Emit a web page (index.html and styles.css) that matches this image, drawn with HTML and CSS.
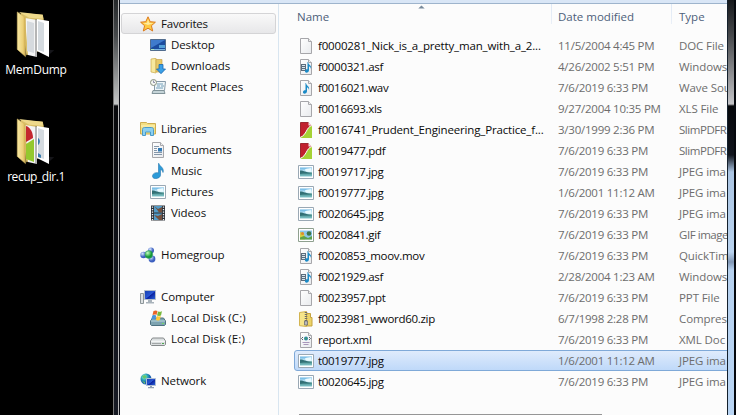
FILE: index.html
```html
<!DOCTYPE html>
<html lang="en">
<head>
<meta charset="utf-8">
<title>Explorer</title>
<link rel="stylesheet" href="styles.css">
</head>
<body>
<svg class="defs" aria-hidden="true">
<defs>
<linearGradient id="gold" x1="0" y1="0" x2="1" y2="0"><stop offset="0" stop-color="#f8e9a4"/><stop offset=".7" stop-color="#ecd078"/><stop offset="1" stop-color="#cba84c"/></linearGradient>
<linearGradient id="paper" x1="0" y1="0" x2="1" y2="1"><stop offset="0" stop-color="#fff"/><stop offset="1" stop-color="#e8eaed"/></linearGradient>
<linearGradient id="sky" x1="0" y1="0" x2="0" y2="1"><stop offset="0" stop-color="#63b2e3"/><stop offset=".5" stop-color="#d8f2f8"/><stop offset=".6" stop-color="#4b9290"/><stop offset="1" stop-color="#83c6cd"/></linearGradient>
<linearGradient id="screen" x1="0" y1="0" x2="1" y2="1"><stop offset="0" stop-color="#153fae"/><stop offset=".5" stop-color="#2956d4"/><stop offset=".55" stop-color="#0a22a0"/><stop offset="1" stop-color="#2f6be0"/></linearGradient>
<radialGradient id="ballb" cx=".35" cy=".3"><stop offset="0" stop-color="#d8e8ff"/><stop offset="1" stop-color="#3c5fc0"/></radialGradient>
<radialGradient id="ballg" cx=".35" cy=".3"><stop offset="0" stop-color="#c4ffc0"/><stop offset="1" stop-color="#159a35"/></radialGradient>
<radialGradient id="globe" cx=".35" cy=".3"><stop offset="0" stop-color="#b0f0f0"/><stop offset=".6" stop-color="#29a7b5"/><stop offset="1" stop-color="#1c62b0"/></radialGradient>
</defs>
<symbol id="page" viewBox="0 0 16 16"><path d="M2.500.5h8l3 3v12h-11z" fill="url(#paper)" stroke="#a6a6aa"/><path d="M10.500.5v3h3" fill="#eee" stroke="#a8a8ac"/></symbol>
<symbol id="note" viewBox="0 0 16 16"><path d="M8 3c.3 3 4 3 3 7-.3-2-1.500-2.500-2-2.500V11c0 3-4 3.500-4 1.200C5 10.500 6.500 10 7.500 10.200V3z" fill="#1a8ac6"/></symbol>
<symbol id="wav" viewBox="0 0 16 16"><use href="#page"/><use href="#note"/></symbol>
<symbol id="media" viewBox="0 0 16 16"><use href="#page"/><path d="M3 5h5v7H3z" fill="#5b6c7c"/><path d="M4 6.500h3M4 8.500h3M4 10.500h3" stroke="#d7e4ec"/><use href="#note" x="2"/></symbol>
<symbol id="pdf" viewBox="0 0 16 16"><path d="M2.500.5h8l3 3v12h-11z" fill="#c1202e" stroke="#9c2730"/><path d="M14 3.500C8 5 9 13 2 15.500v.5h12z" fill="#a5d235"/><path d="M14 3.500C8 5 9 13 2 15.500" fill="none" stroke="#fff"/><path d="M10.500 0v3.500H14z" fill="#f5dedf"/></symbol>
<symbol id="pic" viewBox="0 0 16 16"><path d="M.5 1.500h15v13H.5z" fill="#fff" stroke="#9aa8b4"/><path d="M2 3.500h12v9H2z" fill="url(#sky)"/><path d="M2 6.500c4 0 6 2 12 2.500-4 1-8 0-12 1z" fill="#316f75"/><path d="M7 5.500c2-1.500 4-1 6.500-1.500v3.500c-2 .7-4 .2-6.500-.9z" fill="#eafaff"/></symbol>
<symbol id="gif" viewBox="0 0 16 16"><path d="M.5 1.500h15v13H.5z" fill="#fff" stroke="#8fa08f"/><path d="M2 3.500h12v9H2z" fill="#8cc6ea"/><path d="M2 5l4 1 1 6.500H2z" fill="#d3cf45"/><path d="M2 10.500l4-1.500 4 2 4-2v3.500H2z" fill="#5da24a"/><circle cx="11" cy="6.500" r="2.300" fill="#3f7648"/><circle cx="4.500" cy="6.500" r="1.500" fill="#e08b2c"/></symbol>
<symbol id="zip" viewBox="0 0 16 16"><path d="M1.500 1.500l7-1v15l-7-.8z" fill="#f6e58a" stroke="#d3b450"/><path d="M8.500 2.500h4v4h1.500v8.500H8.500z" fill="#ecd368" stroke="#c5a23e"/><path d="M8 1v11" stroke="#6c6c6a" stroke-width="2.500" stroke-dasharray="1 1"/><path d="M6.500 10h3v4h-3z" fill="#b8b8bb" stroke="#66666a" stroke-width=".7"/></symbol>
<symbol id="xml" viewBox="0 0 16 16"><use href="#page"/><circle cx="8" cy="6.500" r="2" fill="#2d86a9"/><circle cx="8" cy="6.500" r=".9" fill="#43a05b"/><path d="M5 5L3.500 6.500 5 8M11 5l1.500 1.500L11 8" fill="none" stroke="#44505c" stroke-width=".9"/><path d="M4.500 10.500h7M5.500 12.500h5" stroke="#a997ba"/></symbol>
<symbol id="star" viewBox="0 0 16 16"><path d="M8 .8l2.200 4.900 5.200.5-4 3.500 1.300 5.300L8 12.200 3.300 15l1.300-5.300-4-3.500 5.200-.5z" fill="#ffca43" stroke="#dc7b1e"/><path d="M8 3l1.200 4H14L8 9 3 7h4z" fill="#ffeca0"/></symbol>
<symbol id="desktop" viewBox="0 0 16 16"><path d="M.5 2.500h15v11H.5z" fill="#1b4c9f" stroke="#526d8e"/><path d="M1 3h14L1 11z" fill="#3f7bcd"/><path d="M9 8h6v3H9z" fill="#54a2da"/><path d="M1 12.500h14" stroke="#7ab5e3"/><path d="M1 12.500h3" stroke="#b0e6bd"/></symbol>
<symbol id="downloads" viewBox="0 0 16 16"><path d="M1 1l5-.7V15l-5-1z" fill="#f7e89e" stroke="#cbaa4a" stroke-width=".7"/><path d="M6 1.500h6V14H6z" fill="#e8c968" stroke="#c7a34c" stroke-width=".7"/><path d="M9 6.500h4V11h2.500L11 15.700 6.500 11H9z" fill="#3aa0e6" stroke="#1b67b1" stroke-width=".8"/></symbol>
<symbol id="recent" viewBox="0 0 16 16"><path d="M4.500 2.500h11l-1 9h-10z" fill="#eef5f8" stroke="#8699a8"/><path d="M7 5h6M7 7h3m1 0h3M6 9h7" stroke="#739eb8"/><path d="M3 11.500h11l1 3H2z" fill="#c5d4d8" stroke="#819399"/><circle cx="3.500" cy="3.500" r="3" fill="#f4f6f2" stroke="#88917f"/><path d="M3.500 1.500v2H5" fill="none" stroke="#668" stroke-width=".7"/></symbol>
<symbol id="libraries" viewBox="0 0 16 16"><path d="M.5 3V1.500h6l1 1h8V13H.5z" fill="#f3df83" stroke="#cead51"/><path d="M1 5h14" stroke="#fff5bd"/><path d="M2.500 14.500v-6c0-1.500 1-2 2-2h7c1 0 2 .5 2 2v6h-3V11h-5v3.500z" fill="#8bcff0" stroke="#4b9bc8"/></symbol>
<symbol id="docs" viewBox="0 0 16 16"><use href="#page"/><path d="M4 4.500h5M4 6.500h3M4 8.500h3M4 10.500h8M4 12.500h8" stroke="#8597aa"/><path d="M8 6h4v3.500H8z" fill="#3179b5"/></symbol>
<symbol id="music" viewBox="0 0 16 16"><path d="M9 .5c.5 3 5.500 4 4 9-.4-2-1.500-3-2.500-3V12c0 4-8 5-8 1.200C2.500 10 6.500 9 8.500 10V.5z" fill="#2d9bd8" stroke="#2375af" stroke-width=".6"/></symbol>
<symbol id="video" viewBox="0 0 16 16"><path d="M1 .5h14v15H1z" fill="#2c3036"/><path d="M4 1h8v6.500H4zM4 8.500h8V15H4z" fill="#519bc8"/><path d="M4 1l4 3 4-2v5.500H9l-2-3zM4 10l4 1 4-2v6h-3l-2-2z" fill="#74513f"/><path d="M2.500 1.500v14M13.500 1.500v14" stroke="#edf0f4" stroke-width="1.300" stroke-dasharray="1.300 1.200"/></symbol>
<symbol id="home" viewBox="0 0 16 16"><circle cx="11" cy="3.500" r="3" fill="url(#ballb)"/><circle cx="3.500" cy="8" r="3.200" fill="url(#ballb)"/><circle cx="12" cy="12" r="3.400" fill="url(#ballb)"/><circle cx="8.800" cy="7.500" r="3.900" fill="url(#ballg)" stroke="#3c9380" stroke-width=".5"/></symbol>
<symbol id="computer" viewBox="0 0 16 16"><path d="M.5 4.500h3v10h-3z" fill="#dde1e3" stroke="#8d969a"/><path d="M4.500 1.500h11v9h-11z" fill="url(#screen)" stroke="#b3bdca"/><path d="M8 11h4v2H8zM6 13h8v1.500H6z" fill="#a9b3bb"/></symbol>
<symbol id="disk" viewBox="0 0 16 16"><path d="M2.500 7h11l2 3v3.500l-1 1h-13l-1-1V10z" fill="#dadedf" stroke="#85898b"/><path d="M1 10.200h14" stroke="#fff"/><path d="M2 12.500h9" stroke="#a3a7a8"/><path d="M12 12.500h2" stroke="#4ca84e"/></symbol>
<symbol id="diskc" viewBox="0 0 16 16"><path d="M2.500 8h11l2 3v3.500l-1 1h-13l-1-1V11z" fill="#7da3b0" stroke="#4d717f"/><path d="M1 11h14" stroke="#bad6dd"/><path d="M12 13.500h2" stroke="#71db64"/><path d="M3.500 1c2-1 3-.5 4 0L6.500 5c-1.500-.8-2.500-.5-4 0z" fill="#ea6427"/><path d="M8 1.500c1.500.5 3 .5 4-.5l-1 4.500c-1.500.7-3 .4-4 0z" fill="#78b83c"/><path d="M2.300 5.500c1.500-.7 3-.6 4 0L5.300 9.500c-1.500-.8-2.500-.7-4 0z" fill="#4b93d9"/><path d="M6.800 6c1.500.5 3 .5 4 0l-1 4c-1.500.8-3 .5-4 0z" fill="#ffc938"/></symbol>
<symbol id="network" viewBox="0 0 16 16"><circle cx="6" cy="6" r="5.500" fill="url(#globe)"/><path d="M2 3l3-1 2 2-3 2zM2 8l3 1v2z" fill="#65c769"/><path d="M6.500 5.500h9v7h-9z" fill="url(#screen)" stroke="#b1bfd2"/><path d="M10 13h2v1h2v1.200H8V14h2z" fill="#91a1b3"/></symbol>
<symbol id="folder" viewBox="0 0 40 50"><path d="M30 40l9 1-7 6z" fill="#16161a"/><path d="M4 2L27 4l1 4v32L10 46z" fill="#d9bf68"/><path d="M2 1l25 3v4L13 7z" fill="#eed98b"/></symbol>
<symbol id="front" viewBox="0 0 40 50"><path d="M.5 1L9 7v40.500L.5 40z" fill="url(#gold)" stroke="#d6b964" stroke-width=".6"/></symbol>
</svg>

<main class="stage">
  <section class="desk">
    <figure class="shortcut">
      <svg class="big"><use href="#folder"/><path d="M9 7l12 2v37l-9-2z" fill="#f4f4f4"/><path d="M11 10l7 2v30l-7-2z" fill="#d6dade"/><path d="M21 8l12 2v36l-12-6z" fill="#fff"/><path d="M22 10l6 2v29l-6-2z" fill="#d5dbe0"/><path d="M20 8v38" stroke="#777"/><use href="#front"/></svg>
      <figcaption>MemDump</figcaption>
    </figure>
    <figure class="shortcut">
      <svg class="big"><use href="#folder"/><path d="M9 7l12 2v37l-9-2z" fill="#f4f4f4"/><path d="M10 8c4 1 7 6 7 12l-7 4z" fill="#c4282e"/><path d="M10 26l8-5v23l-8-3z" fill="#94c82e"/><path d="M21 8l12 2v36l-12-6z" fill="#fff"/><path d="M22 10l6 2v29l-6-2z" fill="#d5dbe0"/><path d="M22 20c3 2 2 6 0 7zM22 35l3 2v3l-3-1z" fill="#397cae"/><path d="M20 8v38" stroke="#777"/><use href="#front"/></svg>
      <figcaption class="snug">recup_dir.1</figcaption>
    </figure>
  </section>
  <div class="frame left"></div>
  <section class="window">
    <div class="strip"></div>
    <div class="panes">
      <nav class="nav">
        <div class="n root on"><svg><use href="#star"/></svg>Favorites</div>
        <div class="n"><svg><use href="#desktop"/></svg>Desktop</div>
        <div class="n"><svg><use href="#downloads"/></svg>Downloads</div>
        <div class="n"><svg><use href="#recent"/></svg>Recent Places</div>
        <div class="n root gap"><svg><use href="#libraries"/></svg>Libraries</div>
        <div class="n"><svg><use href="#docs"/></svg>Documents</div>
        <div class="n"><svg><use href="#music"/></svg>Music</div>
        <div class="n"><svg><use href="#pic"/></svg>Pictures</div>
        <div class="n"><svg><use href="#video"/></svg>Videos</div>
        <div class="n root gap"><svg><use href="#home"/></svg>Homegroup</div>
        <div class="n root gap"><svg><use href="#computer"/></svg>Computer</div>
        <div class="n disk"><svg><use href="#diskc"/></svg>Local Disk (C:)</div>
        <div class="n disk"><svg><use href="#disk"/></svg>Local Disk (E:)</div>
        <div class="n root gap"><svg><use href="#network"/></svg>Network</div>
      </nav>
      <div class="files">
        <div class="head"><span class="c1">Name</span><span class="c2">Date modified</span><span class="c3">Type</span><svg class="sort" viewBox="0 0 8 5"><path d="M0 4.500L4 .5l4 4z" fill="#788a9b"/></svg></div>
        <div class="rows">
          <div class="r long"><svg><use href="#page"/></svg><b>f0000281_Nick_is_a_pretty_man_with_a_2...</b><i>11/5/2004 4:45 PM</i><em>DOC File</em></div>
          <div class="r"><svg><use href="#media"/></svg><b>f0000321.asf</b><i>4/26/2002 5:51 PM</i><em>Windows</em></div>
          <div class="r"><svg><use href="#wav"/></svg><b>f0016021.wav</b><i>7/6/2019 6:33 PM</i><em>Wave Sou</em></div>
          <div class="r"><svg><use href="#page"/></svg><b>f0016693.xls</b><i>9/27/2004 10:35 PM</i><em>XLS File</em></div>
          <div class="r long"><svg><use href="#pdf"/></svg><b>f0016741_Prudent_Engineering_Practice_f...</b><i>3/30/1999 2:36 PM</i><em class="snug">SlimPDFR</em></div>
          <div class="r"><svg><use href="#pdf"/></svg><b>f0019477.pdf</b><i>7/6/2019 6:33 PM</i><em class="snug">SlimPDFR</em></div>
          <div class="r"><svg><use href="#pic"/></svg><b>f0019717.jpg</b><i>7/6/2019 6:33 PM</i><em>JPEG ima</em></div>
          <div class="r"><svg><use href="#pic"/></svg><b>f0019777.jpg</b><i>1/6/2001 11:12 AM</i><em>JPEG ima</em></div>
          <div class="r"><svg><use href="#pic"/></svg><b>f0020645.jpg</b><i>7/6/2019 6:33 PM</i><em>JPEG ima</em></div>
          <div class="r"><svg><use href="#gif"/></svg><b>f0020841.gif</b><i>7/6/2019 6:33 PM</i><em class="snug">GIF image</em></div>
          <div class="r"><svg><use href="#media"/></svg><b>f0020853_moov.mov</b><i>7/6/2019 6:33 PM</i><em>QuickTim</em></div>
          <div class="r"><svg><use href="#media"/></svg><b>f0021929.asf</b><i>2/28/2004 1:23 AM</i><em>Windows</em></div>
          <div class="r"><svg><use href="#page"/></svg><b>f0023957.ppt</b><i>7/6/2019 6:33 PM</i><em>PPT File</em></div>
          <div class="r"><svg><use href="#zip"/></svg><b>f0023981_wword60.zip</b><i>6/7/1998 2:28 PM</i><em>Compres</em></div>
          <div class="r"><svg><use href="#xml"/></svg><b>report.xml</b><i>7/6/2019 6:33 PM</i><em>XML Doc</em></div>
          <div class="r sel"><svg><use href="#pic"/></svg><b>t0019777.jpg</b><i>1/6/2001 11:12 AM</i><em>JPEG ima</em></div>
          <div class="r"><svg><use href="#pic"/></svg><b>t0020645.jpg</b><i>7/6/2019 6:33 PM</i><em>JPEG ima</em></div>
        </div>
        <div class="scroll"></div>
      </div>
    </div>
  </section>
  <div class="frame right"></div>
</main>
</body>
</html>
```
FILE: styles.css
```css
* { box-sizing: border-box; }
body { margin: 0; background: #000; font: 11.5px/21px "Open Sans", "Noto Sans", sans-serif; color: #111; }
.defs { position: absolute; width: 0; height: 0; }
.stage { display: flex; width: 736px; height: 415px; overflow: hidden; }
.desk { width: 113px; padding-top: 11px; background: #000; }
.shortcut { margin: 0; width: 72px; height: 107px; color: #fff; text-align: center; }
.big { display: block; width: 40px; height: 48px; margin-left: 16px; }
.shortcut figcaption { font-size: 12px; line-height: 22px; letter-spacing: -.25px; white-space: nowrap; }
.shortcut .snug { letter-spacing: -.45px; }
.frame { flex: none; width: 7px; border-left: 1px solid #777; border-right: 2px solid #181a22; background: linear-gradient(#25282a 0, #45484a 35px, #c4c6c6 104px, #07080b 106px, #171a24 415px); }
.left { border-right: 1px solid #0b0d15; box-shadow: inset -1px 0 #bbb; }
.right { width: 9px; border-left: 1px solid #14202c; border-right: 2px solid #05080d; background: linear-gradient(#16181b 0, #46484b 35px, #c4c4c7 104px, #05070a 106px, #11151d 155px, #abc5e3 172px, #b9d3ef 252px, #8096b4 262px, #b6d1ef 270px, #b9d5f4 415px); }
.window { width: 607px; display: flex; flex-direction: column; background: #fcfcfc; overflow: hidden; }
.strip { flex: none; height: 4px; background: #d9e6f6; border-bottom: 1px solid #9eb4cc; }
.panes { display: flex; flex: 1; min-height: 0; }
.nav { width: 159px; padding: 9px 2px 0 1px; border-right: 1px solid #d8e5f0; letter-spacing: -.1px; }
.n { display: flex; align-items: center; height: 21px; padding-left: 29px; white-space: nowrap; }
.n svg { flex: none; width: 16px; height: 16px; margin-right: 5px; }
.n.root { padding-left: 19px; }
.n.gap { margin-top: 21px; }
.n.disk { letter-spacing: .08px; }
.n.on { padding-left: 18px; border: 1px solid #d4d4d6; border-radius: 3px; background: linear-gradient(#f9f9f9, #e7e7e9); letter-spacing: -.2px; }
.files { position: relative; flex: 1; min-width: 0; display: flex; flex-direction: column; }
.head { position: relative; display: flex; height: 31px; color: #4c607a; line-height: 26px; }
.head span { flex: none; }
.c1 { width: 273px; padding-left: 18px; background: linear-gradient(#dfe9f5, #e9eff7) right top / 1px 20px no-repeat; }
.c2 { width: 120px; padding-left: 6px; background: linear-gradient(#dfe9f5, #e9eff7) right top / 1px 20px no-repeat; }
.c3 { padding-left: 7px; }
.sort { position: absolute; left: 139px; top: 1px; width: 7px; height: 4px; }
.r { display: flex; align-items: center; width: 470px; height: 21px; margin-left: 15px; padding-left: 4px; white-space: nowrap; }
.r svg { flex: none; width: 16px; height: 16px; margin-right: 4px; }
.r b { flex: none; width: 240px; font-weight: 400; color: #0a0a0a; letter-spacing: -.3px; }
.r.long b { letter-spacing: -.16px; }
.r i, .r em { flex: none; font-style: normal; color: #6d6d6d; }
.r i { width: 121px; letter-spacing: -.24px; }
.r em { letter-spacing: -.1px; }
.r .snug { letter-spacing: -.45px; }
.sel { padding-left: 3px; border: 1px solid #7fa9d8; border-radius: 3px; background: linear-gradient(#dfebfc, #bfd9f9); }
.scroll { margin: auto 125px 0 20px; height: 1px; background: #969696; }
```
